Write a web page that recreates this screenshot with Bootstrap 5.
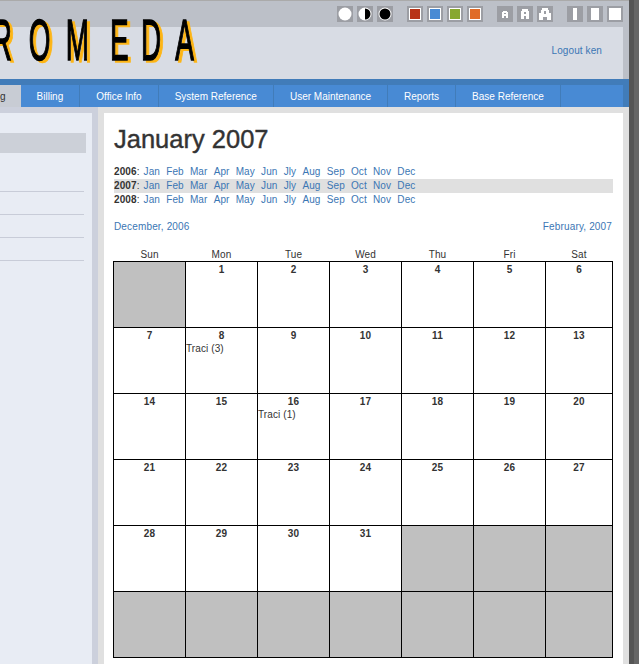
<!DOCTYPE html>
<html lang="en">
<head>
<meta charset="utf-8">
<title>Calendar</title>
<link href="https://cdn.jsdelivr.net/npm/bootstrap@5.3.0/dist/css/bootstrap.min.css" rel="stylesheet">
<style>
html,body{height:664px;overflow:hidden}
body{background:#e0e0e0;font-family:"Liberation Sans",Arial,sans-serif;font-size:10px;color:#333;letter-spacing:.1px}
a{color:#3b76b4;text-decoration:none}
.page-frame{width:639px;height:664px;display:flex;overflow:hidden}
.page-main{width:629px;flex:none;display:flex;flex-direction:column;height:664px;border-top:1px solid #aaa;background:#e0e0e0}
.page-edge{width:10px;flex:none;background:#666;border-left:5px solid #555}
.top-strip{height:26px;background:#bcc0c8;padding:5px 6px 0 0;display:flex;justify-content:flex-end;flex:none}
.swatch-group{display:flex;gap:4px;margin-left:14px}
.swatch{width:16px;height:16px;background:#9c9ea4;display:flex;align-items:center;justify-content:center}
.banner-wrap{height:52px;padding-right:6px;background:#bcc0c8;flex:none}
.banner{height:52px;background:#d8dce4;display:flex;justify-content:flex-end;position:relative}
.brand-art{position:absolute;left:0;top:-27px;overflow:visible;filter:drop-shadow(3px 2px 0 #fdb515)}
.brand-art text{font-family:"Liberation Sans",sans-serif;font-size:58px;fill:#000;stroke:#000;stroke-width:1.5px;letter-spacing:0}
.logout{margin:17px 21px 0 0;line-height:14px}
.tabbar{flex:none;height:28px;background:#417cb9;padding:6px 6px 0 0;display:flex;letter-spacing:0}
.tabbar a{height:22px;line-height:23px;color:#fff;background:#488ad4;padding:0 16px;border-right:1px solid #417cb9;white-space:nowrap}
.tabbar a.now{background:#c8ccd4;color:#333;padding:0 15px 0 0;border:0}
.tabbar .tab-rest{flex:1;background:#488ad4}
.body-row{flex:1;display:flex;padding:6px 6px 0 0;min-height:0}
.side-col{width:98px;flex:none;margin-top:-6px;padding-top:6px;background:#ccd0dc;padding-right:6px}
.side-panel{height:100%;background:#e8ecf4;padding-top:20px}
.side-hit{height:20px;width:86px;background:#ccd0d8}
.side-line{height:23px;width:84px;border-bottom:1px solid #c8ccd8}
.side-first{height:39px}
.paper{margin-left:6px;flex:1;background:#fff;padding:11px 10px 0 10px}
.paper h1{font-size:25.5px;line-height:30px;font-weight:400;letter-spacing:0;margin:0 0 11px;color:#333;-webkit-text-stroke:.4px #333}
.year-row{height:14px;line-height:14px;display:flex;white-space:pre}
.year-row.on{background:#e0e0e0}
.year-row b{font-weight:700}
.year-row .mo{margin-left:6.2px}
.year-row b+.mo{margin-left:4px}
.flip{display:flex;justify-content:space-between;margin-top:13px;height:14px;line-height:14px;padding-right:1px;letter-spacing:.15px}
.cal-grid{table-layout:fixed;border-collapse:collapse;width:499px;margin:14px 0 0 -1px}
.cal-grid th{font-weight:400;text-align:center;height:13px;line-height:13px;padding:0;width:72px}
.cal-grid th:last-child{width:67px}
.cal-grid td{border:1px solid #000;height:66px;padding:0;vertical-align:top;line-height:13px}
.cal-grid td.off{background:#c0c0c0}
.cal-grid .num{display:block;text-align:center;font-weight:700;padding-top:1px}
.cal-grid .num+span{display:block}
</style>
</head>
<body>
<div class="page-frame">
<div class="page-main">
 <div class="top-strip">
  <div class="swatch-group">
   <div class="swatch"><svg width="14" height="14" viewBox="0 0 14 14"><circle cx="7" cy="7" r="6.5" fill="#fff"/></svg></div>
   <div class="swatch"><svg width="14" height="14" viewBox="0 0 14 14"><circle cx="7" cy="7" r="6.5" fill="#fff"/><path d="M7 1.5a5.5 5.5 0 0 1 0 11z" fill="#000"/></svg></div>
   <div class="swatch"><svg width="14" height="14" viewBox="0 0 14 14"><circle cx="7" cy="7" r="6.5" fill="#fff"/><circle cx="7" cy="7" r="5.5" fill="#000"/></svg></div>
  </div>
  <div class="swatch-group">
   <div class="swatch"><svg width="12" height="12"><rect x=".5" y=".5" width="11" height="11" fill="#b83418" stroke="#fff"/></svg></div>
   <div class="swatch"><svg width="12" height="12"><rect x=".5" y=".5" width="11" height="11" fill="#488ad4" stroke="#fff"/></svg></div>
   <div class="swatch"><svg width="12" height="12"><rect x=".5" y=".5" width="11" height="11" fill="#88a830" stroke="#fff"/></svg></div>
   <div class="swatch"><svg width="12" height="12"><rect x=".5" y=".5" width="11" height="11" fill="#e06c28" stroke="#fff"/></svg></div>
  </div>
  <div class="swatch-group">
   <div class="swatch"><svg width="6" height="7"><path fill-rule="evenodd" d="M0 7V1h1V0h4v1h1v6H4V5H2v2zM2 2v1h2V2z" fill="#fff"/></svg></div>
   <div class="swatch"><svg width="8" height="10"><path fill-rule="evenodd" d="M0 10V2h1V0h6v2h1v8H5V7H3v3zM3 3v2h2V3z" fill="#fff"/></svg></div>
   <div class="swatch"><svg width="12" height="12"><path fill-rule="evenodd" d="M0 12V5h2V2h1V0h6v2h1v3h2v7H8V9H4v3zM5 3v3h2V3z" fill="#fff"/></svg></div>
  </div>
  <div class="swatch-group">
   <div class="swatch"><svg width="4" height="12"><rect width="4" height="12" fill="#fff"/></svg></div>
   <div class="swatch"><svg width="8" height="12"><rect width="8" height="12" fill="#fff"/></svg></div>
   <div class="swatch"><svg width="12" height="12"><rect width="12" height="12" fill="#fff"/></svg></div>
  </div>
 </div>
 <div class="banner-wrap">
  <div class="banner">
   <svg class="brand-art" width="210" height="70"><text transform="scale(.48 1)" x="-17 60 137 229 294 365" y="60">ROMEDA</text></svg>
   <a class="logout" href="#">Logout ken</a>
  </div>
 </div>
 <nav class="tabbar">
  <a class="now" href="#">g</a><a href="#">Billing</a><a href="#">Office Info</a><a href="#">System Reference</a><a href="#">User Maintenance</a><a href="#">Reports</a><a href="#">Base Reference</a><span class="tab-rest"></span>
 </nav>
 <div class="body-row">
  <aside class="side-col">
   <div class="side-panel">
    <div class="side-hit"></div>
    <div class="side-line side-first"></div>
    <div class="side-line"></div>
    <div class="side-line"></div>
    <div class="side-line"></div>
   </div>
  </aside>
  <main class="paper">
   <h1>January 2007</h1>
   <div class="year-row"><b>2006</b>:<a class="mo" href="#">Jan</a><a class="mo" href="#">Feb</a><a class="mo" href="#">Mar</a><a class="mo" href="#">Apr</a><a class="mo" href="#">May</a><a class="mo" href="#">Jun</a><a class="mo" href="#">Jly</a><a class="mo" href="#">Aug</a><a class="mo" href="#">Sep</a><a class="mo" href="#">Oct</a><a class="mo" href="#">Nov</a><a class="mo" href="#">Dec</a></div>
   <div class="year-row on"><b>2007</b>:<a class="mo" href="#">Jan</a><a class="mo" href="#">Feb</a><a class="mo" href="#">Mar</a><a class="mo" href="#">Apr</a><a class="mo" href="#">May</a><a class="mo" href="#">Jun</a><a class="mo" href="#">Jly</a><a class="mo" href="#">Aug</a><a class="mo" href="#">Sep</a><a class="mo" href="#">Oct</a><a class="mo" href="#">Nov</a><a class="mo" href="#">Dec</a></div>
   <div class="year-row"><b>2008</b>:<a class="mo" href="#">Jan</a><a class="mo" href="#">Feb</a><a class="mo" href="#">Mar</a><a class="mo" href="#">Apr</a><a class="mo" href="#">May</a><a class="mo" href="#">Jun</a><a class="mo" href="#">Jly</a><a class="mo" href="#">Aug</a><a class="mo" href="#">Sep</a><a class="mo" href="#">Oct</a><a class="mo" href="#">Nov</a><a class="mo" href="#">Dec</a></div>
   <div class="flip"><a href="#">December, 2006</a><a href="#">February, 2007</a></div>
   <table class="cal-grid">
    <thead><tr><th>Sun</th><th>Mon</th><th>Tue</th><th>Wed</th><th>Thu</th><th>Fri</th><th>Sat</th></tr></thead>
    <tbody>
     <tr><td class="off"></td><td><span class="num">1</span></td><td><span class="num">2</span></td><td><span class="num">3</span></td><td><span class="num">4</span></td><td><span class="num">5</span></td><td><span class="num">6</span></td></tr>
     <tr><td><span class="num">7</span></td><td><span class="num">8</span><span>Traci (3)</span></td><td><span class="num">9</span></td><td><span class="num">10</span></td><td><span class="num">11</span></td><td><span class="num">12</span></td><td><span class="num">13</span></td></tr>
     <tr><td><span class="num">14</span></td><td><span class="num">15</span></td><td><span class="num">16</span><span>Traci (1)</span></td><td><span class="num">17</span></td><td><span class="num">18</span></td><td><span class="num">19</span></td><td><span class="num">20</span></td></tr>
     <tr><td><span class="num">21</span></td><td><span class="num">22</span></td><td><span class="num">23</span></td><td><span class="num">24</span></td><td><span class="num">25</span></td><td><span class="num">26</span></td><td><span class="num">27</span></td></tr>
     <tr><td><span class="num">28</span></td><td><span class="num">29</span></td><td><span class="num">30</span></td><td><span class="num">31</span></td><td class="off"></td><td class="off"></td><td class="off"></td></tr>
     <tr><td class="off"></td><td class="off"></td><td class="off"></td><td class="off"></td><td class="off"></td><td class="off"></td><td class="off"></td></tr>
    </tbody>
   </table>
  </main>
 </div>
</div>
<div class="page-edge"></div>
</div>
</body>
</html>
